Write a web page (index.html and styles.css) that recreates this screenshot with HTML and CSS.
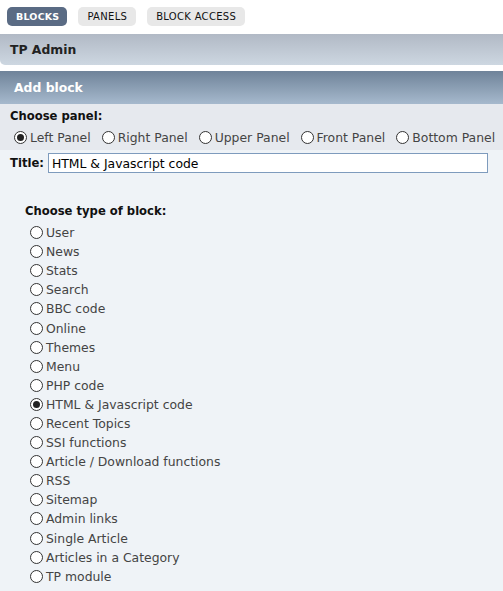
FILE: index.html
```html
<!DOCTYPE html>
<html>
<head>
<meta charset="utf-8">
<link rel="stylesheet" href="styles.css">
</head>
<body>
<div class="tabs">
  <span class="tab active">BLOCKS</span>
  <span class="tab">PANELS</span>
  <span class="tab">BLOCK ACCESS</span>
</div>
<div class="catbar">TP Admin</div>
<div class="titlebar">Add block</div>
<div class="panelsec">
  <div class="heading">Choose panel:</div>
  <div class="panelrow">
    <label class="opt"><input type="radio" name="panel" checked><span>Left Panel</span></label>
    <label class="opt"><input type="radio" name="panel"><span>Right Panel</span></label>
    <label class="opt"><input type="radio" name="panel"><span>Upper Panel</span></label>
    <label class="opt"><input type="radio" name="panel"><span>Front Panel</span></label>
    <label class="opt"><input type="radio" name="panel"><span>Bottom Panel</span></label>
  </div>
</div>
<div class="main">
  <div class="titlerow">
    <span class="heading">Title:</span>
    <input class="titleinput" type="text" value="HTML &amp; Javascript code">
  </div>
  <div class="typesec">
    <div class="heading">Choose type of block:</div>
    <div class="typelist">
      <label class="opt"><input type="radio" name="type"><span>User</span></label>
      <label class="opt"><input type="radio" name="type"><span>News</span></label>
      <label class="opt"><input type="radio" name="type"><span>Stats</span></label>
      <label class="opt"><input type="radio" name="type"><span>Search</span></label>
      <label class="opt"><input type="radio" name="type"><span>BBC code</span></label>
      <label class="opt"><input type="radio" name="type"><span>Online</span></label>
      <label class="opt"><input type="radio" name="type"><span>Themes</span></label>
      <label class="opt"><input type="radio" name="type"><span>Menu</span></label>
      <label class="opt"><input type="radio" name="type"><span>PHP code</span></label>
      <label class="opt"><input type="radio" name="type" checked><span>HTML &amp; Javascript code</span></label>
      <label class="opt"><input type="radio" name="type"><span>Recent Topics</span></label>
      <label class="opt"><input type="radio" name="type"><span>SSI functions</span></label>
      <label class="opt"><input type="radio" name="type"><span>Article / Download functions</span></label>
      <label class="opt"><input type="radio" name="type"><span>RSS</span></label>
      <label class="opt"><input type="radio" name="type"><span>Sitemap</span></label>
      <label class="opt"><input type="radio" name="type"><span>Admin links</span></label>
      <label class="opt"><input type="radio" name="type"><span>Single Article</span></label>
      <label class="opt"><input type="radio" name="type"><span>Articles in a Category</span></label>
      <label class="opt"><input type="radio" name="type"><span>TP module</span></label>
    </div>
  </div>
</div>
</body>
</html>
```
FILE: styles.css
```css
html, body {
  margin: 0;
  padding: 0;
  background: #ffffff;
  font-family: "DejaVu Sans", Verdana, sans-serif;
  font-size: 12.4px;
  color: #444;
  overflow: hidden;
}
.tabs {
  display: flex;
  gap: 11px;
  padding: 7px 0 0 7px;
  height: 27px;
  box-sizing: border-box;
}
.tab {
  display: inline-flex;
  align-items: center;
  height: 19px;
  padding: 0 9px;
  border-radius: 5px;
  background: #e8e8e8;
  color: #111;
  font-size: 10px;
  letter-spacing: 0.3px;
}
.tab.active {
  background: #5a6b84;
  color: #fff;
  font-weight: bold;
  font-size: 9.5px;
  letter-spacing: 0.2px;
  padding: 0 8px 0 9px;
}
.catbar {
  margin-top: 7px;
  height: 31px;
  line-height: 31px;
  padding-left: 10px;
  background: linear-gradient(#b1b9c5, #cdd7e1);
  border-radius: 0 0 0 5px;
  font-weight: bold;
  font-size: 12.4px;
  color: #222;
}
.titlebar {
  margin-top: 6px;
  height: 33px;
  line-height: 33px;
  padding-left: 14px;
  background: linear-gradient(#6f8399, #a6b9cd);
  font-weight: bold;
  font-size: 12.4px;
  color: #fff;
}
.panelsec {
  background: #e6e9ee;
  padding: 5px 0 0 10px;
  height: 46px;
  box-sizing: border-box;
}
.heading {
  font-weight: bold;
  font-size: 11.6px;
  color: #111;
  white-space: nowrap;
}
.panelrow {
  display: flex;
  gap: 11px;
  margin-top: 5px;
  padding-left: 4px;
}
.opt {
  display: flex;
  align-items: center;
  gap: 3px;
  height: 19.1px;
  white-space: nowrap;
  flex-shrink: 0;
}
.opt input {
  -webkit-appearance: none;
  appearance: none;
  width: 13px;
  height: 13px;
  margin: 0;
  border: 1px solid #333;
  border-radius: 50%;
  background: #fff;
  box-sizing: border-box;
  display: grid;
  place-content: center;
  flex-shrink: 0;
}
.opt input:checked::before {
  content: "";
  width: 7px;
  height: 7px;
  border-radius: 50%;
  background: #222;
}
.main {
  background: #eff3f7;
  padding: 3px 0 10px 10px;
}
.titlerow {
  display: flex;
  align-items: center;
  gap: 4px;
}
.titleinput {
  width: 440px;
  height: 20px;
  box-sizing: border-box;
  border: 1px solid #7e9bbd;
  padding: 0 3px;
  font-family: "DejaVu Sans", Verdana, sans-serif;
  font-size: 12.4px;
  color: #000;
  background: #fff;
}
.typesec {
  margin-top: 31px;
  padding-left: 15px;
}
.typelist {
  margin-top: 5px;
  padding-left: 5px;
}
```
